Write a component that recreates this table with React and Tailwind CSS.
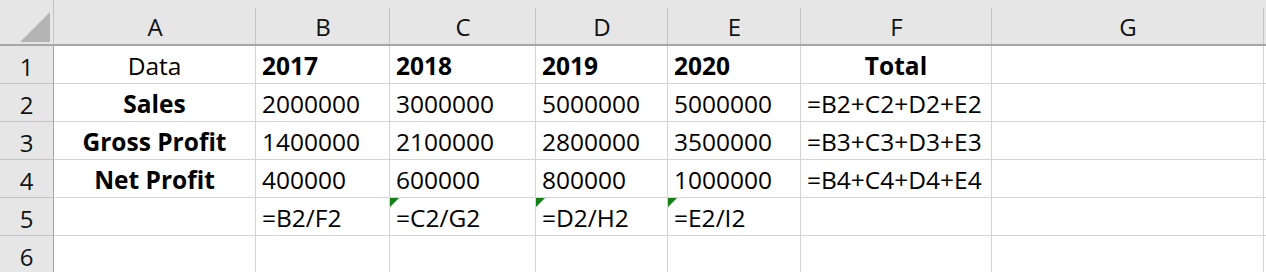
import React from "react";

const COLS = ["A", "B", "C", "D", "E", "F", "G"];

const ROWS = [
  [
    { v: "Data", c: true },
    { v: "2017", b: true },
    { v: "2018", b: true },
    { v: "2019", b: true },
    { v: "2020", b: true },
    { v: "Total", b: true, c: true },
    { v: "" },
  ],
  [
    { v: "Sales", b: true, c: true },
    { v: "2000000" },
    { v: "3000000" },
    { v: "5000000" },
    { v: "5000000" },
    { v: "=B2+C2+D2+E2" },
    { v: "" },
  ],
  [
    { v: "Gross Profit", b: true, c: true },
    { v: "1400000" },
    { v: "2100000" },
    { v: "2800000" },
    { v: "3500000" },
    { v: "=B3+C3+D3+E3" },
    { v: "" },
  ],
  [
    { v: "Net Profit", b: true, c: true },
    { v: "400000" },
    { v: "600000" },
    { v: "800000" },
    { v: "1000000" },
    { v: "=B4+C4+D4+E4" },
    { v: "" },
  ],
  [
    { v: "" },
    { v: "=B2/F2" },
    { v: "=C2/G2", flag: true },
    { v: "=D2/H2", flag: true },
    { v: "=E2/I2", flag: true },
    { v: "" },
    { v: "" },
  ],
  [{ v: "" }, { v: "" }, { v: "" }, { v: "" }, { v: "" }, { v: "" }, { v: "" }],
];

const font = { fontFamily: '"Open Sans", "Noto Sans", sans-serif' };

function ColHeader({ label }) {
  return (
    <div className="relative flex h-[46px] items-center justify-center border-b-2 border-[#a6a6a6] bg-[#e6e6e6] pt-[10px] text-[24px] text-[#111]">
      {label}
      <span className="absolute top-[8px] right-0 bottom-0 w-px bg-[#c4c4c4]" />
    </div>
  );
}

function Cell({ cell, last }) {
  return (
    <div
      className={
        "relative flex h-[38px] items-end overflow-visible whitespace-nowrap border-r border-b border-[#d4d4d4] px-[6px] pb-[3px] text-[24.5px] leading-none text-black " +
        (cell.c ? "justify-center " : "justify-start ") +
        (cell.b ? "font-bold " : "font-normal ") +
        (last ? "border-b-0 " : "")
      }
    >
      {cell.flag && (
        <span className="absolute top-0 left-0 h-0 w-0 border-t-[9px] border-r-[9px] border-t-[#128012] border-r-transparent" />
      )}
      <span className="pb-[2px]">{cell.v}</span>
    </div>
  );
}

export default function App() {
  return (
    <div
      className="grid h-[272px] w-[1266px] overflow-hidden bg-white grid-cols-[54px_202px_134px_146px_132px_133px_191px_272px_2px]"
      style={font}
    >
      {/* corner cell with select-all triangle */}
      <div className="relative flex h-[46px] items-end justify-end border-r border-b-2 border-r-[#c4c4c4] border-b-[#a6a6a6] bg-[#e6e6e6] pr-[3px] pb-[2px]">
        <svg width="30" height="30" viewBox="0 0 30 30">
          <polygon points="30,0 30,30 0,30" fill="#b4b4b4" />
        </svg>
      </div>
      {COLS.map((c) => (
        <ColHeader key={c} label={c} />
      ))}
      <div className="h-[46px] border-b-2 border-[#a6a6a6] bg-[#e6e6e6]" />

      {ROWS.map((row, r) => (
        <React.Fragment key={r}>
          <div
            className={
              "flex h-[38px] items-center justify-center border-r border-b border-r-[#a6a6a6] border-b-[#c4c4c4] bg-[#e6e6e6] pt-[4px] text-[24px] text-[#111] " +
              (r === ROWS.length - 1 ? "border-b-0" : "")
            }
          >
            {r + 1}
          </div>
          {row.map((cell, i) => (
            <Cell key={i} cell={cell} last={r === ROWS.length - 1} />
          ))}
          <div
            className={
              "h-[38px] border-b border-[#d4d4d4] " +
              (r === ROWS.length - 1 ? "border-b-0" : "")
            }
          />
        </React.Fragment>
      ))}
    </div>
  );
}
